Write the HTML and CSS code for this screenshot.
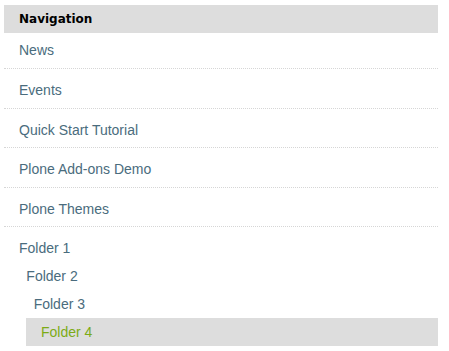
FILE: index.html
```html
<!DOCTYPE html>
<html>
<head>
<meta charset="utf-8">
<link rel="stylesheet" href="styles.css">
</head>
<body>
<nav class="portlet">
  <div class="portlet-header">Navigation</div>
  <ul class="nav-tree">
    <li class="nav-item"><a class="nav-link" href="#">News</a></li>
    <li class="nav-item"><a class="nav-link" href="#">Events</a></li>
    <li class="nav-item"><a class="nav-link" href="#">Quick Start Tutorial</a></li>
    <li class="nav-item"><a class="nav-link" href="#">Plone Add-ons Demo</a></li>
    <li class="nav-item"><a class="nav-link" href="#">Plone Themes</a></li>
    <li class="nav-item">
      <a class="nav-link" href="#">Folder 1</a>
      <ul class="nav-sub">
        <li>
          <a class="nav-link" href="#">Folder 2</a>
          <ul class="nav-sub">
            <li>
              <a class="nav-link" href="#">Folder 3</a>
              <ul class="nav-sub">
                <li><a class="nav-link current" href="#">Folder 4</a></li>
              </ul>
            </li>
          </ul>
        </li>
      </ul>
    </li>
  </ul>
</nav>
</body>
</html>
```
FILE: styles.css
```css
html, body {
  margin: 0;
  padding: 0;
  background: #fff;
}
body {
  padding: 5px 11px 0 4px;
}
.portlet {
  width: 434px;
}
.portlet-header {
  background: #dddddd;
  height: 28px;
  line-height: 28px;
  padding-left: 15px;
  font-family: "DejaVu Sans", sans-serif;
  font-weight: bold;
  font-size: 12px;
  color: #000;
}
.nav-tree, .nav-sub {
  list-style: none;
  margin: 0;
  padding: 0;
}
.nav-sub {
  padding-left: 7.33px;
}
.nav-item {
  padding: 7px 0 3.5px;
  border-top: 1px dotted #d6d6d6;
}
.nav-item:first-child {
  border-top: none;
  padding: 3px 0 4px;
}
.nav-link {
  display: block;
  padding: 4px 0 4px 15px;
  line-height: 20px;
  font-family: "Liberation Sans", Arial, sans-serif;
  font-size: 14px;
  color: #4a6c7d;
  text-decoration: none;
}
.nav-link.current {
  background: #dddddd;
  color: #7cab16;
}
```
